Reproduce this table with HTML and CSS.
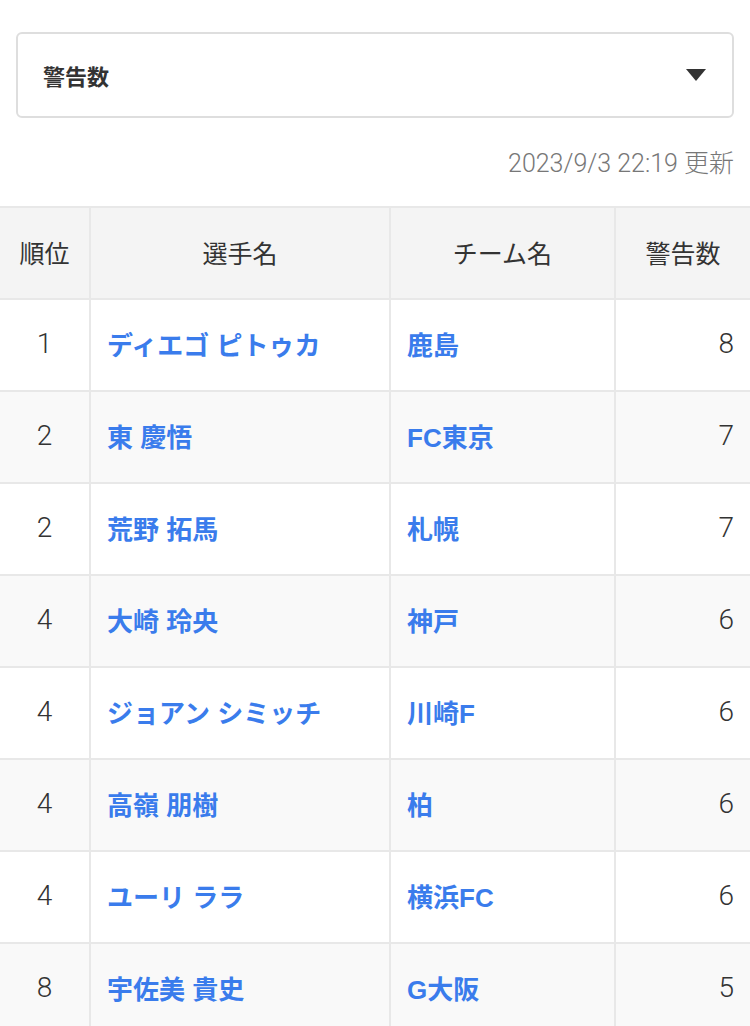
FILE: index.html
```html
<!DOCTYPE html>
<html lang="ja">
<head>
<meta charset="utf-8">
<title>警告数ランキング</title>
<link rel="stylesheet" href="styles.css">
</head>
<body>
<div class="controls">
  <div class="select">
    <span class="select-label">警告数</span>
    <svg class="select-arrow" width="20" height="12" viewBox="0 0 20 12"><path d="M0 0H20L10 12Z" fill="#333"/></svg>
  </div>
  <p class="updated">2023/9/3 22:19 更新</p>
</div>
<table class="ranking">
  <colgroup>
    <col class="c-rank"><col class="c-name"><col class="c-team"><col class="c-num">
  </colgroup>
  <thead>
    <tr><th>順位</th><th>選手名</th><th>チーム名</th><th>警告数</th></tr>
  </thead>
  <tbody>
    <tr><td class="rank">1</td><td class="link">ディエゴ ピトゥカ</td><td class="link">鹿島</td><td class="num">8</td></tr>
    <tr><td class="rank">2</td><td class="link">東 慶悟</td><td class="link">FC東京</td><td class="num">7</td></tr>
    <tr><td class="rank">2</td><td class="link">荒野 拓馬</td><td class="link">札幌</td><td class="num">7</td></tr>
    <tr><td class="rank">4</td><td class="link">大崎 玲央</td><td class="link">神戸</td><td class="num">6</td></tr>
    <tr><td class="rank">4</td><td class="link">ジョアン シミッチ</td><td class="link">川崎F</td><td class="num">6</td></tr>
    <tr><td class="rank">4</td><td class="link">高嶺 朋樹</td><td class="link">柏</td><td class="num">6</td></tr>
    <tr><td class="rank">4</td><td class="link">ユーリ ララ</td><td class="link">横浜FC</td><td class="num">6</td></tr>
    <tr><td class="rank">8</td><td class="link">宇佐美 貴史</td><td class="link">G大阪</td><td class="num">5</td></tr>
  </tbody>
</table>
</body>
</html>
```
FILE: styles.css
```css
html, body {
  margin: 0;
  padding: 0;
  background: #fff;
}
body {
  font-family: "Liberation Sans", "Noto Sans CJK JP", sans-serif;
  color: #333;
}
.controls {
  padding: 32px 16px 0;
}
.select {
  box-sizing: border-box;
  height: 86px;
  border: 2px solid #dedede;
  border-radius: 6px;
  padding: 0 26px 0 25px;
  display: flex;
  align-items: center;
  justify-content: space-between;
}
.select-label {
  font-family: "Noto Sans CJK JP", sans-serif;
  font-weight: 700;
  font-size: 22px;
  color: #333;
}
.select-arrow {
  display: block;
}
.updated {
  margin: 0;
  height: 88px;
  line-height: 92px;
  text-align: right;
  font-family: "Roboto", "Noto Sans CJK JP", sans-serif;
  font-weight: 300;
  font-size: 25px;
  color: #777;
}
.ranking {
  width: 100%;
  border-collapse: collapse;
  table-layout: fixed;
  border-top: 2px solid #e8e8e8;
  font-size: 25px;
}
.c-rank { width: 90px; }
.c-name { width: 300px; }
.c-team { width: 225px; }
.c-num { width: 135px; }
.ranking th,
.ranking td {
  height: 92px;
  padding: 0 16px 3px;
  border: 2px solid #e8e8e8;
  box-sizing: border-box;
}
.ranking tr > :first-child { border-left: none; }
.ranking tr > :last-child { border-right: none; }
.ranking th {
  background: #f4f4f4;
  font-weight: 400;
  font-family: "Noto Sans CJK JP", sans-serif;
  color: #333;
  text-align: center;
}
.ranking tbody tr:nth-child(even) td {
  background: #f9f9f9;
}
.ranking td.rank,
.ranking td.num {
  font-family: "Roboto", sans-serif;
  font-weight: 300;
  font-size: 28px;
  color: #333;
}
.ranking td.rank {
  text-align: center;
  padding-left: 0;
  padding-right: 0;
}
.ranking td.link {
  color: #3a7cec;
  font-weight: 700;
  font-size: 26px;
  text-align: left;
}
.ranking td.num {
  text-align: right;
}
```
